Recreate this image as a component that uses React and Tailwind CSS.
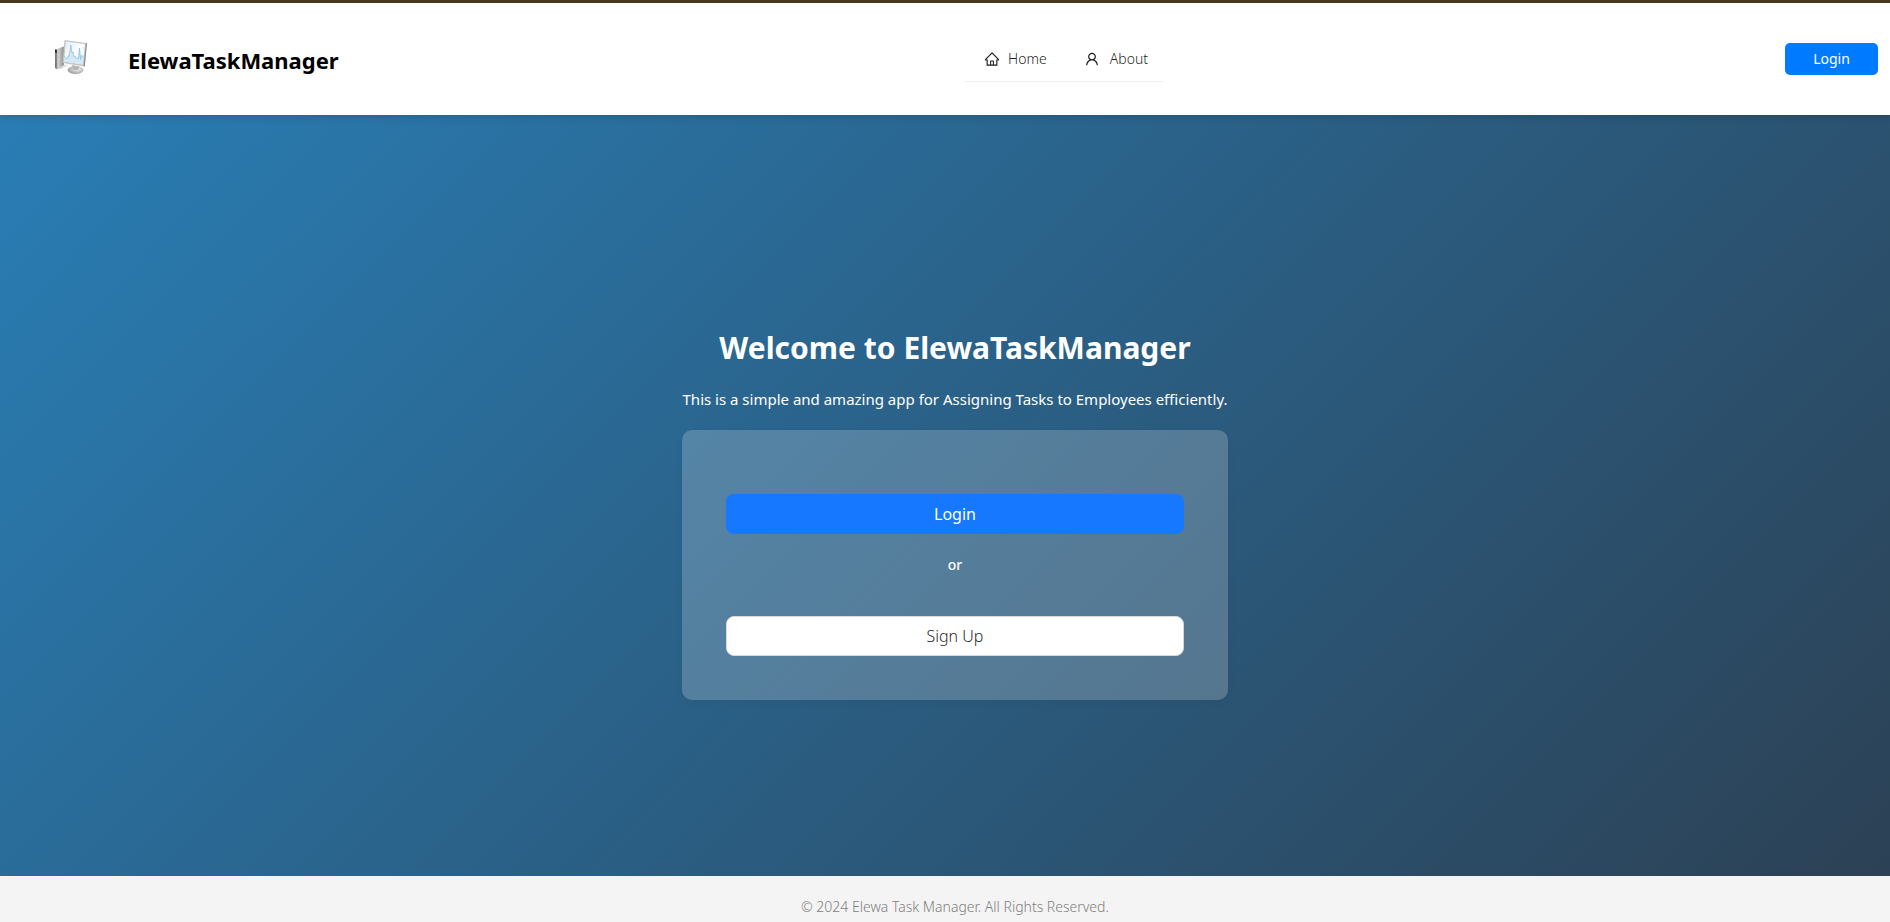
import { AiOutlineHome, AiOutlineUser } from "react-icons/ai";

function Logo() {
  return (
    <svg viewBox="0 0 34 36" className="mb-1 h-9 w-[34px]" aria-hidden="true">
      <defs>
        <linearGradient id="tower" x1="0" x2="1">
          <stop offset="0" stopColor="#a9a9ab" />
          <stop offset="0.4" stopColor="#cfcfcf" />
          <stop offset="1" stopColor="#8c8c8c" />
        </linearGradient>
        <linearGradient id="screen" x1="0" y1="0" x2="1" y2="1">
          <stop offset="0" stopColor="#dceef8" />
          <stop offset="0.5" stopColor="#fbfdfe" />
          <stop offset="1" stopColor="#e4f1f8" />
        </linearGradient>
        <radialGradient id="foot" cx="0.6" cy="0.4" r="0.6">
          <stop offset="0" stopColor="#f4f4f4" />
          <stop offset="1" stopColor="#a0a0a0" />
        </radialGradient>
      </defs>
      <path d="M1 10.500 10 7.500V26L4 30.500 1 29Z" fill="url(#tower)" />
      <path d="M1 10.500 2.800 11V30L1 29Z" fill="#77777f" />
      <path d="M1 10.500 2.800 11V14L1 13.500Z" fill="#27272b" />
      <path d="M4 30.500 11 25.500 14 26 7 30Z" fill="#dedede" />
      <ellipse cx="21.500" cy="31" rx="8" ry="4" fill="url(#foot)" />
      <path d="M18 26 25 27.500 24 31H19.500Z" fill="#b5b5b5" />
      <path d="M10.500 1 33 4 30.500 27.500 8.500 24Z" fill="#c6c6c6" />
      <path d="M32 4 33 4 30.800 27.500 29.500 27.300Z" fill="#8d8d8d" />
      <path d="M11.800 2.500 31 5 28.800 25.500 10 22.500Z" fill="url(#screen)" />
      <path
        d="M10.300 17 11.500 19.500 13 20 14.500 16.500 15.200 17.500 16.800 6 18 14 19 13 20 18 21.500 17.500 23 20 24.500 19.500 25.500 9 26.500 20.500 27.500 16.500 29.500 18 28.800 25.500 10 22.500Z"
        fill="#d3e9f5"
      />
      <path
        d="M10.300 17 11.500 19.500 13 20 14.500 16.500 15.200 17.500 16.800 6 18 14 19 13 20 18 21.500 17.500 23 20 24.500 19.500 25.500 9 26.500 20.500 27.500 16.500 29.500 18"
        fill="none"
        stroke="#8dbfdc"
        strokeWidth="0.8"
      />
    </svg>
  );
}

function Header() {
  return (
    <header className="relative z-10 grid h-[115px] grid-cols-[1fr_auto_1fr] items-center border-t-3 border-[#49371f] bg-white pl-[54px] pr-3 shadow-[0_2px_8px_rgba(0,0,0,0.15)]">
      <div className="flex items-center gap-10">
        <Logo />
        <span className="pt-0.5 text-[22px] leading-8 font-bold text-black">ElewaTaskManager</span>
      </div>
      <nav className="ml-[196px] flex h-[46px] w-[200px] items-center justify-between border-b border-[#f0f0f0] pr-4 pl-5 text-sm font-light text-black/90">
        <a href="#home" className="flex items-center gap-2">
          <AiOutlineHome size={16} />
          Home
        </a>
        <a href="#about" className="flex items-center gap-2.5">
          <AiOutlineUser size={16} />
          About
        </a>
      </nav>
      <button
        type="button"
        className="h-8 w-[93px] justify-self-end rounded-[5px] bg-[#007bff] text-sm text-white"
      >
        Login
      </button>
    </header>
  );
}

export default function App() {
  return (
    <div className="flex h-screen flex-col overflow-hidden bg-[linear-gradient(135deg,#2980b9,#2c3e50_103%)] font-['Noto_Sans','Open_Sans',sans-serif]">
      <Header />
      <main className="flex grow flex-col items-center justify-center pt-9 pl-5 text-white">
        <h1 className="text-3xl leading-10 font-bold">Welcome to ElewaTaskManager</h1>
        <p className="mt-[18px] text-[15px] leading-[26px]">
          This is a simple and amazing app for Assigning Tasks to Employees efficiently.
        </p>
        <section className="mt-[18px] flex w-[546px] flex-col items-center rounded-[10px] bg-white/20 px-11 pt-16 pb-11 shadow-[0_4px_8px_rgba(0,0,0,0.04)]">
          <button
            type="button"
            className="h-10 w-full rounded-lg bg-[#1677ff] text-base"
          >
            Login
          </button>
          <p className="mt-5 text-sm leading-[22px] font-medium">or</p>
          <button
            type="button"
            className="mt-10 h-10 w-full rounded-lg border border-[#d9d9d9] bg-white text-base font-light text-black/90"
          >
            Sign Up
          </button>
        </section>
      </main>
      <footer className="h-[46px] shrink-0 bg-[#f4f4f4] pt-5 pl-5 text-center text-sm leading-[22px] font-light text-[#808080]">
        © 2024 Elewa Task Manager. All Rights Reserved.
      </footer>
    </div>
  );
}
